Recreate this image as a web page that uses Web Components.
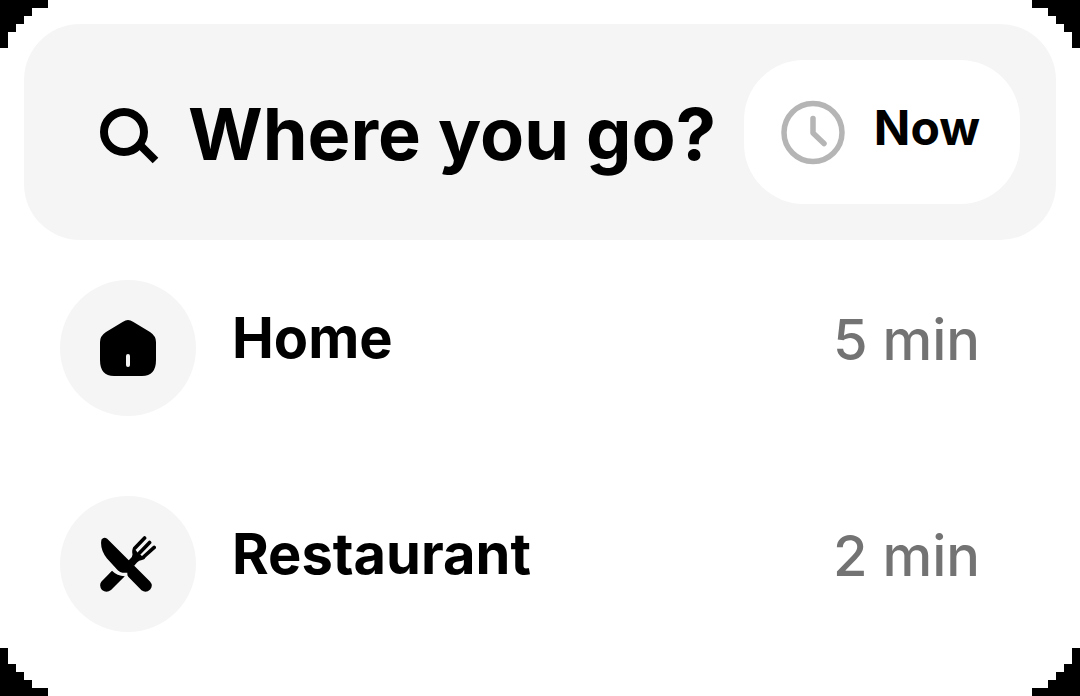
<!DOCTYPE html>
<html lang="en">
<head>
<meta charset="utf-8">
<meta name="viewport" content="width=device-width, initial-scale=1">
<title>Where you go?</title>
<style>
  html { background: #000; }
  body { margin: 0; font-family: Inter, "Liberation Sans", sans-serif; color: #000; }
</style>
</head>
<body>
<ride-sheet>
  <ride-search slot="search" label="Where you go?"><time-button>Now</time-button></ride-search>
  <place-row time="5 min">
    <svg slot="icon" width="56" height="56" viewBox="0 0 56 56" aria-hidden="true">
      <path d="M23 1.700Q28-1.500 33 1.700L50 12Q56 16 56 22V40Q56 56 42 56H14Q0 56 0 40V22Q0 16 6 12Z"/>
      <rect x="26" y="34" width="4" height="13" rx="2" fill="#f5f5f5"/>
    </svg>
    Home
  </place-row>
  <place-row time="2 min">
    <svg slot="icon" width="56" height="56" viewBox="0 0 56 56" aria-hidden="true">
      <path d="M44.600 2L35 12M49.600 6.500L39 17.500M54.200 11.400L43.500 21" fill="none" stroke="#000" stroke-width="3.600" stroke-linecap="round"/>
      <path d="M33.500 11Q31.500 14 32.500 18.500Q32.500 21 30 23L28 25L34 30L37 26.500Q39 24.200 42 24Q44.500 23.500 45.500 21.500L42 20L37.500 16.500Z"/>
      <path d="M1.500 3.500Q4 .2 7.200 2.800L50 45.500Q53.500 49.500 50.200 53.500Q46 57.500 41.500 54.300L28.500 41Q27 39.500 27.400 36.800H22.500Q20 36.600 18 34.500L7 22.500Q-.5 13 1.500 3.500Z"/>
      <path d="M12 34.800Q17 40 24.800 40.300L11 54Q6.500 57.500 2 54Q-1.500 49.500 1.500 45.500Z"/>
    </svg>
    Restaurant
  </place-row>
</ride-sheet>

<script>
const define = (name, markup, setup) => {
  const template = document.createElement('template');
  template.innerHTML = markup;
  customElements.define(name, class extends HTMLElement {
    constructor() {
      super();
      this.attachShadow({ mode: 'open' }).append(template.content.cloneNode(true));
    }
    connectedCallback() { if (setup) setup(this, this.shadowRoot); }
  });
};

define('ride-sheet', `
  <style>
    :host {
      display: block; box-sizing: border-box; min-height: 100vh; padding: 24px; background: #fff;
      /* stepped corners, one step is 8px */
      clip-path: polygon(
        48px 0, calc(100% - 48px) 0, calc(100% - 48px) 8px, calc(100% - 32px) 8px, calc(100% - 32px) 16px,
        calc(100% - 24px) 16px, calc(100% - 24px) 24px, calc(100% - 16px) 24px, calc(100% - 16px) 32px,
        calc(100% - 8px) 32px, calc(100% - 8px) 48px, 100% 48px,
        100% calc(100% - 48px), calc(100% - 8px) calc(100% - 48px), calc(100% - 8px) calc(100% - 32px),
        calc(100% - 16px) calc(100% - 32px), calc(100% - 16px) calc(100% - 24px), calc(100% - 24px) calc(100% - 24px),
        calc(100% - 24px) calc(100% - 16px), calc(100% - 32px) calc(100% - 16px), calc(100% - 32px) calc(100% - 8px),
        calc(100% - 48px) calc(100% - 8px), calc(100% - 48px) 100%,
        48px 100%, 48px calc(100% - 8px), 32px calc(100% - 8px), 32px calc(100% - 16px), 24px calc(100% - 16px),
        24px calc(100% - 24px), 16px calc(100% - 24px), 16px calc(100% - 32px), 8px calc(100% - 32px),
        8px calc(100% - 48px), 0 calc(100% - 48px),
        0 48px, 8px 48px, 8px 32px, 16px 32px, 16px 24px, 24px 24px, 24px 16px, 32px 16px, 32px 8px, 48px 8px);
    }
    nav { display: flex; flex-direction: column; gap: 80px; padding: 40px 36px; }
  </style>
  <slot name="search"></slot>
  <nav aria-label="Places"><slot></slot></nav>`);

define('ride-search', `
  <style>
    :host { display: block; }
    form { display: flex; align-items: center; padding: 36px 36px 36px 76px; border-radius: 56px; background: #f5f5f5; }
    label { display: flex; flex: none; margin-right: 24px; }
    input {
      flex: 1; min-width: 0; height: 88px; padding: 4px 0 0; border: 0; outline: 0; background: none;
      font: 700 72px/88px Inter, "Liberation Sans", sans-serif; color: #000;
    }
    input::placeholder { color: #000; opacity: 1; }
  </style>
  <form role="search">
    <label for="q">
      <svg width="64" height="64" viewBox="0 0 64 64" fill="none" stroke="#000" stroke-width="8" role="img" aria-label="Search">
        <circle cx="24" cy="32" r="20"/><path d="M38 43L55.500 60.500"/>
      </svg>
    </label>
    <input id="q" type="text" autocomplete="off">
    <slot></slot>
  </form>`, (host, root) => {
    root.querySelector('input').placeholder = host.getAttribute('label');
  });

define('time-button', `
  <style>
    :host { display: block; flex: none; }
    button {
      display: flex; align-items: center; gap: 28px; height: 144px; padding: 0 40px 0 36px;
      border: 0; border-radius: 60px; background: #fff; color: #000;
      font: 700 48px/56px Inter, "Liberation Sans", sans-serif;
    }
    span { padding-bottom: 8px; }
  </style>
  <button type="button">
    <svg width="66" height="66" viewBox="0 0 66 66" fill="none" stroke="#b5b5b5" stroke-width="5.500" stroke-linecap="round" stroke-linejoin="round" aria-hidden="true">
      <circle cx="33" cy="33.500" r="29"/><path d="M33 19.500V34L44 44.500"/>
    </svg>
    <span><slot></slot></span>
  </button>`);

define('place-row', `
  <style>
    :host { display: block; }
    a { display: flex; align-items: center; gap: 36px; padding-right: 40px; color: inherit; text-decoration: none; font-size: 56px; line-height: 68px; }
    .disc { display: grid; place-items: center; flex: none; width: 136px; height: 136px; border-radius: 50%; background: #f5f5f5; }
    .name { flex: 1; font-weight: 700; padding-bottom: 20px; }
    .time { font-weight: 500; color: #737373; padding-bottom: 16px; }
  </style>
  <a href="#">
    <span class="disc"><slot name="icon"></slot></span>
    <span class="name"><slot></slot></span>
    <span class="time"></span>
  </a>`, (host, root) => {
    root.querySelector('.time').textContent = host.getAttribute('time');
  });
</script>
</body>
</html>
